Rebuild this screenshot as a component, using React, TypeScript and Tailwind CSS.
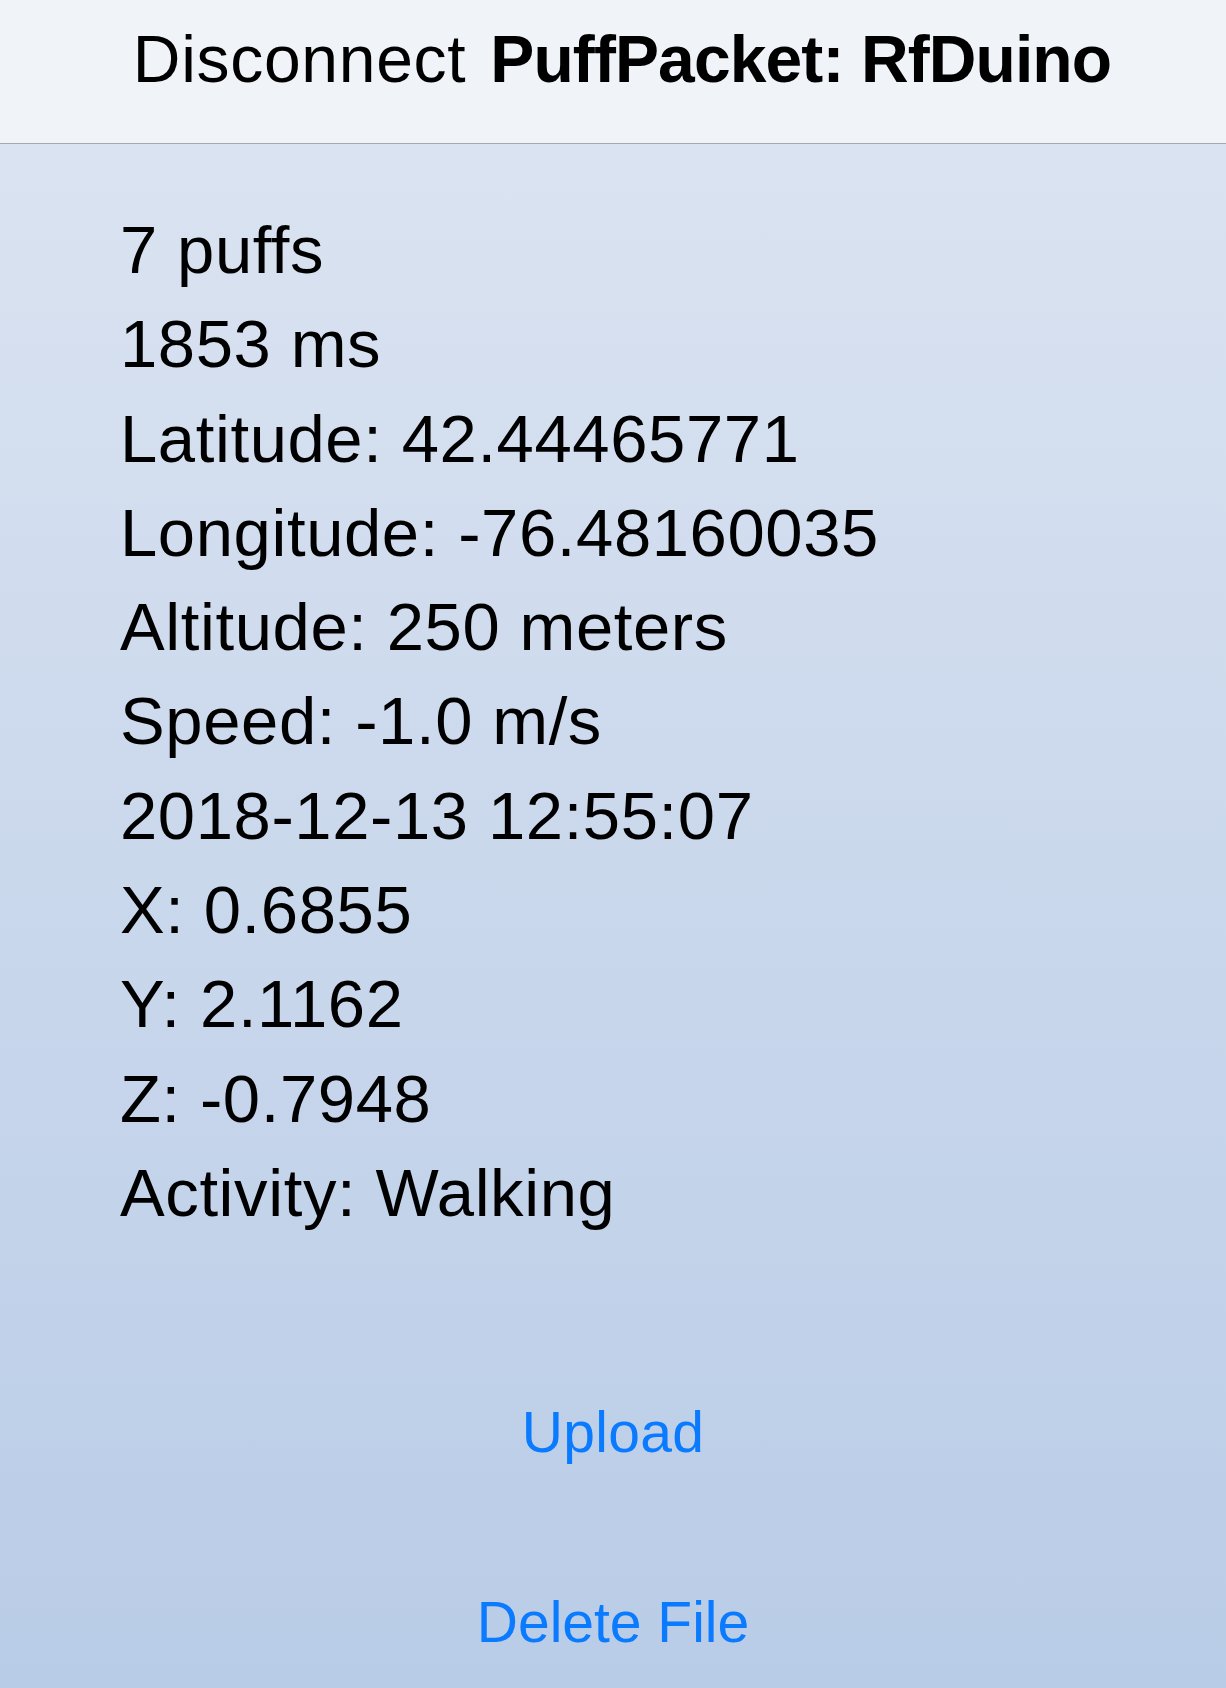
import React from "react";

const lines = [
  "7 puffs",
  "1853 ms",
  "Latitude: 42.44465771",
  "Longitude: -76.48160035",
  "Altitude: 250 meters",
  "Speed: -1.0 m/s",
  "2018-12-13 12:55:07",
  "X: 0.6855",
  "Y: 2.1162",
  "Z: -0.7948",
  "Activity: Walking",
];

export default function App() {
  return (
    <div
      className="w-full h-[1688px] flex flex-col overflow-hidden text-black"
      style={{ fontFamily: '"Liberation Sans", Arial, sans-serif' }}
    >
      <header className="h-[144px] shrink-0 bg-[#f0f3f8] border-b border-[#a8a9ad] flex justify-center items-start pt-[26px] pl-[18px]">
        <span className="text-[66px] leading-[66px] tracking-[0.7px]">Disconnect</span>
        <span className="text-[66px] leading-[66px] font-bold ml-[24px] tracking-[-0.9px]">
          PuffPacket: RfDuino
        </span>
      </header>
      <main className="flex-1 bg-gradient-to-b from-[#dae3f1] to-[#b9cce7] flex flex-col">
        <div className="pt-[59px] pl-[120px] flex flex-col">
          {lines.map((l) => (
            <div key={l} className="text-[67px] leading-[94.3px] h-[94.3px] whitespace-nowrap tracking-[0.6px]">
              {l}
            </div>
          ))}
        </div>
        <div className="flex flex-col items-center mt-[164px]">
          <button className="text-[57px] leading-[57px] text-[#0a7aff] tracking-[0.3px]">Upload</button>
          <button className="text-[57px] leading-[57px] text-[#0a7aff] mt-[133px]">Delete File</button>
        </div>
      </main>
    </div>
  );
}
